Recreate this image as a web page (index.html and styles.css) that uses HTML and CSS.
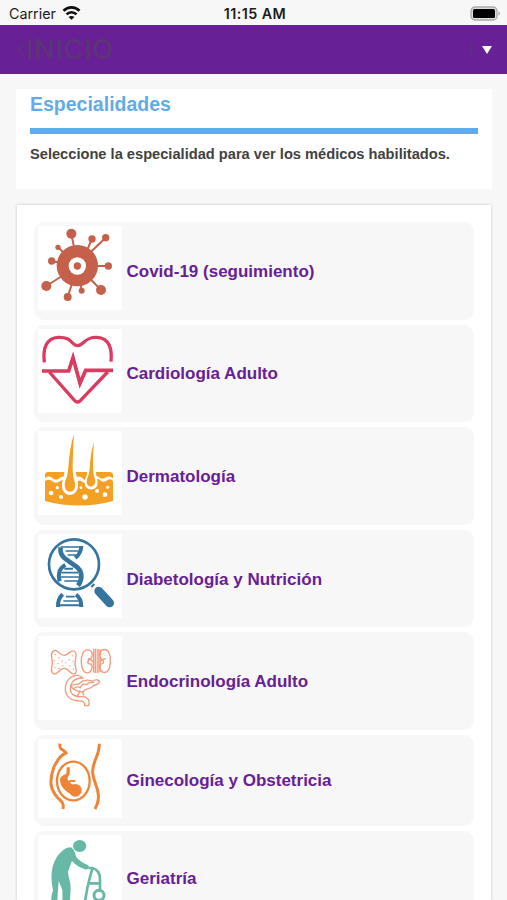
FILE: index.html
```html
<!DOCTYPE html>
<html lang="es">
<head>
  <meta charset="UTF-8"/>
  <meta name="viewport" content="width=device-width, initial-scale=1.0"/>
  <title>Especialidades</title>
  <link rel="stylesheet" href="styles.css">
</head>
<body>
  <div class="status">
    <div class="carrier">
      <span>Carrier</span>
      <svg width="19" height="14" viewBox="0 0 18 14" fill="none" stroke="#111" stroke-width="2.7">
        <path d="M1 4.8C5.500.2 12.500.2 17 4.800"/>
        <path d="M4 8.400c2.900-2.900 7.100-2.900 10 0"/>
        <path d="M9 13.800 6.100 11c1.600-1.500 4.200-1.500 5.800 0z" fill="#111" stroke="none"/>
      </svg>
    </div>
    <div class="time">11:15 AM</div>
    <div class="battery">
      <svg width="31" height="15" viewBox="0 0 31 15">
        <rect x="1" y="1" width="26" height="13" rx="4" fill="#ddd" stroke="#aaa" stroke-width="1.3"/>
        <rect x="3" y="3" width="22" height="9" rx="1.5" fill="#000"/>
        <path d="M28.5 5.2v4.6c2-1 2-3.600 0-4.600z" fill="#aaa"/>
      </svg>
    </div>
  </div>

  <header class="navbar">
    <div class="back">
      <svg width="8" height="14" viewBox="0 0 8 14" fill="none" stroke="#5c3577" stroke-width="1.5"><path d="M7 1 1.5 7 7 13"/></svg>
      <span>INICIO</span>
    </div>
    <div class="menu">
      <svg width="4" height="14" viewBox="0 0 4 14" fill="#5c3577"><circle cx="2" cy="2" r="1.5"/><circle cx="2" cy="7" r="1.5"/><circle cx="2" cy="12" r="1.5"/></svg>
      <svg width="10" height="8" viewBox="0 0 10 8"><path d="M0 0h10L5 8z" fill="#fff"/></svg>
    </div>
  </header>

  <section class="intro">
    <h1>Especialidades</h1>
    <p>Seleccione la especialidad para ver los médicos habilitados.</p>
  </section>

  <main class="list">
    <div class="item">
      <div class="icon">
        <svg viewBox="24 33 252 252" stroke="#c5614a" stroke-width="6" fill="#c5614a">
          <path d="M143 153 124 56M160 130l26-58M175 118l52-50M143 153h92M143 153l70 72M143 153l12 74M143 153l-30 93M143 153l-94 60M143 153l-78-15M143 153 84 97"/>
          <g stroke="none">
            <circle cx="142" cy="152" r="62"/>
            <circle cx="124" cy="56" r="15"/>
            <circle cx="186" cy="72" r="11"/>
            <circle cx="227" cy="68" r="11"/>
            <circle cx="235" cy="153" r="11"/>
            <circle cx="213" cy="225" r="15"/>
            <circle cx="155" cy="227" r="9"/>
            <circle cx="113" cy="246" r="12"/>
            <circle cx="49" cy="213" r="15"/>
            <circle cx="65" cy="138" r="11"/>
            <circle cx="84" cy="97" r="8"/>
            <circle cx="142" cy="153" r="26" fill="#fff"/>
            <circle cx="142" cy="153" r="11"/>
          </g>
        </svg>
      </div>
      <span>Covid-19 (seguimiento)</span>
    </div>

    <div class="item">
      <div class="icon">
        <svg viewBox="24 27 252 252" fill="none" stroke="#da3b5f" stroke-width="10">
          <path d="M43 127C38 85 49 54 85 52c40-2 40 25 58 25s20-27 58-25c36 2 46 33 42 73"/>
          <path d="M36 153h80l13-40 21 77 17-39h82" stroke-width="11"/>
          <path d="m58 156 76 86q8 8 17 0l82-86"/>
        </svg>
      </div>
      <span>Cardiología Adulto</span>
    </div>

    <div class="item">
      <div class="icon">
        <svg viewBox="24 24 252 252" fill="#f3a024">
          <path d="M45 165V157Q45 147 55 147H238Q249 147 249 157V166Q240 157 228 163Q216 171 205 161Q197 155 190 163L178 172Q168 176 160 168Q148 156 138 164L110 168Q100 157 90 164Q78 176 66 164Q56 156 45 165Z"/>
          <path d="M45 174Q56 166 65 174Q78 185 92 173Q100 168 107 175L140 177Q148 168 158 177Q168 186 182 180L198 170Q205 165 212 173Q222 180 234 170Q242 167 249 174V234Q147 261 45 234Z"/>
          <path d="M104 140Q102 158 98 171C82 231 157 231 142 171L136 140ZM172 140Q172 156 166 168C153 210 214 210 201 168L196 140Z" fill="#fff"/>
          <path d="M132 33Q128 98 128 140Q128 160 134 178C144 216 97 216 105 178Q113 160 115 134Q119 71 132 33ZM192 58Q187 108 190 143Q190 157 195 169C201 198 164 198 171 169Q178 155 179 136Q182 84 192 58Z"/>
          <g fill="#fff">
            <circle cx="82" cy="194" r="5"/><circle cx="63" cy="210" r="7"/><circle cx="93" cy="222" r="6"/>
            <circle cx="165" cy="222" r="8"/><circle cx="153" cy="194" r="4"/><circle cx="201" cy="204" r="6"/>
            <circle cx="225" cy="215" r="7"/><circle cx="233" cy="193" r="5"/>
          </g>
        </svg>
      </div>
      <span>Dermatología</span>
    </div>

    <div class="item">
      <div class="icon">
        <svg viewBox="24 24 252 252" fill="none" stroke="#34749f" stroke-width="8">
          <circle cx="132" cy="115" r="75"/>
          <path d="M92 64c-8 45 62 45 62 86 0 12-3 20-10 29" stroke-width="14"/>
          <path d="M154 60q-1 22-18 36M106 117c-18 9-23 28-17 49M84 243q-1-24 14-38M154 243q0-26-16-37" stroke-width="12"/>
          <path d="M92 63h66M107 75h38M113 87h25M94 140h50M91 153h60M103 165h44M108 212h26M100 225h45" stroke-width="5"/>
          <path d="M103 128h26M84 238h72" stroke-width="6"/>
          <path d="m184 183 9-9" stroke-width="6"/>
          <path d="m206 195 33 36" stroke-width="26" stroke-linecap="round"/>
        </svg>
      </div>
      <span>Diabetología y Nutrición</span>
    </div>

    <div class="item">
      <div class="icon">
        <svg viewBox="24 25 252 252" fill="none" stroke="#f09a7c" stroke-width="4">
          <path d="M72 69c10-5 18 14 30 14s20-17 30-13c13 7 3 25 3 37s10 27-2 32c-12 3-16-17-31-17s-18 20-30 17c-14-5-5-22-5-35s-9-28 5-35z"/>
          <path d="M76 80v3M87 89v3M73 97v3M84 106v3M75 119v3M87 121v3M97 99v3M107 104v3M117 94v3M128 83v3M129 99v3M119 113v3M130 123v3M98 113v3" stroke-width="4"/>
          <path d="M180 68c-22-8-27 20-26 38 1 18 8 33 22 29 10-5 12-18 9-26-10 2-15-5-9-12 10-2 16-20 4-29zM216 67c22-8 26 19 25 37-1 20-7 33-22 30-10-5-12-17-8-25 9 1 13-5 7-12-9-4-13-20-2-30z"/>
          <path d="M191 63v72M197 63v73M204 64v72M210 65v68M173 93q13 1 18 13M227 93q-14 1-18 13" stroke-width="4.5"/>
          <path d="M158 151c-15-16-43-5-50 18-8 29 8 49 37 51 14-1 20 3 19 14h12c5-18-5-29-23-27-24 1-35-12-31-31 3-17 18-25 36-25z"/>
          <path d="M121 175c12-8 20 0 29-9 13-13 27-9 38-5 7-7 21-5 20 3-2 8-14 6-20 12-7 9-20 5-25 13-6 9-17 1-23 0-9-2-12-7-19-14zM132 182q10-8 19-2 7-15 18-9 9-9 23-6M151 189l-10 18M157 190l4 14"/>
        </svg>
      </div>
      <span>Endocrinología Adulto</span>
    </div>

    <div class="item short">
      <div class="icon">
        <svg viewBox="24 26 252 236" fill="none" stroke="#ed8438" stroke-width="7">
          <path d="M90 40c-4 20 12 16 18 28-16 6-28 24-37 44-15 43-8 67 10 88 10 11 22 15 18 36M208 40c0 37-20 53-20 83s21 53 17 82q-1 16-10 31" stroke-width="9"/>
          <ellipse cx="130" cy="152" rx="49" ry="58" stroke-width="7"/>
          <g fill="#ed8438" stroke="none">
            <path d="M110 111h10c-2 10 2 18-4 25q-5 5-2 14 8 12 21 16l-8 27c-20-8-37-25-37-44 0-10 9-14 19-19z"/>
            <circle cx="136" cy="180" r="19"/>
          </g>
          <path d="m112 156 12-5 12 2" stroke-width="6"/>
        </svg>
      </div>
      <span>Ginecología y Obstetricia</span>
    </div>

    <div class="item last">
      <div class="icon">
        <svg viewBox="24 32 252 252" fill="#67b9a6">
          <ellipse cx="149" cy="65" rx="20" ry="18"/>
          <path d="M121 69c12 4 13 15 17 27 7 14 24 20 38 28q3 11-8 12c-17-6-32-14-42-27l-12 33c1 18 9 34 8 51l-5 90H98l-1-86-11-27-2 30-6 82H60c2-34 1-61 9-84-7-34-8-68 11-99 13-18 27-30 41-30z"/>
          <g fill="none" stroke="#67b9a6" stroke-width="8">
            <path d="M176 131h10c17 3 24 14 24 35v36M187 133q-9 31-15 58l-14 80M175 177h35"/>
            <circle cx="207" cy="213" r="15" stroke-width="9"/>
          </g>
        </svg>
      </div>
      <span>Geriatría</span>
    </div>
  </main>
</body>
</html>
```
FILE: styles.css
```css
html, body {
  height: 100%;
  overflow: hidden;
}
body {
  display: flex;
  flex-direction: column;
  margin: 0;
  background: #f7f7f7;
  font-family: "Liberation Sans", Arial, Helvetica, sans-serif;
}
svg { display: block; }

.status {
  display: grid;
  grid-template-columns: 1fr auto 1fr;
  align-items: center;
  flex: none;
  height: 25px;
  padding: 1px 6px 0 9px;
  box-sizing: border-box;
  font-family: Inter, sans-serif;
  font-size: 14.3px;
  color: #1c1c1c;
}
.carrier {
  display: flex;
  align-items: center;
  gap: 6px;
}
.time {
  font-weight: 600;
  letter-spacing: 0.45px;
}
.battery {
  display: flex;
  justify-content: flex-end;
}

.navbar {
  display: flex;
  align-items: center;
  justify-content: space-between;
  flex: none;
  height: 49px;
  padding: 0 15px 0 17px;
  box-sizing: border-box;
  background: #672096;
}
.back {
  display: flex;
  align-items: center;
  gap: 1px;
  font-family: Inter, sans-serif;
  font-size: 27px;
  font-weight: 500;
  letter-spacing: 0.8px;
  color: #5c3577;
}
.menu {
  display: flex;
  align-items: center;
  gap: 9px;
}

.intro {
  flex: none;
  height: 100px;
  margin: 15px 15px 0 16px;
  padding: 0 14px;
  box-sizing: border-box;
  background: #fff;
}
.intro h1 {
  height: 45px;
  margin: 0;
  border-bottom: 6px solid #62abe8;
  box-sizing: border-box;
  font-size: 19.5px;
  line-height: 30px;
  color: #62abe8;
}
.intro p {
  margin: 11px 0 0;
  font-size: 14.65px;
  font-weight: bold;
  line-height: 18px;
  color: #424242;
  white-space: nowrap;
}

.list {
  flex: 1;
  min-height: 0;
  overflow: hidden;
  margin: 16px 16px 0 17px;
  padding: 17px 17px 0;
  background: #fff;
  box-shadow: 0 0 3px rgba(0,0,0,0.2);
}
.item {
  display: flex;
  align-items: center;
  gap: 4.5px;
  height: 97.6px;
  margin-bottom: 5px;
  padding: 4px;
  box-sizing: border-box;
  background: #f7f7f7;
  border-radius: 10px;
  font-size: 17px;
  font-weight: bold;
  color: #672096;
}
.item span { padding-top: 2px; }
.icon {
  align-self: flex-start;
  width: 84px;
  height: 84px;
  background: #fff;
}
.short { height: 91px; }
.short .icon { height: 79px; }
.last { height: 94px; }
```
